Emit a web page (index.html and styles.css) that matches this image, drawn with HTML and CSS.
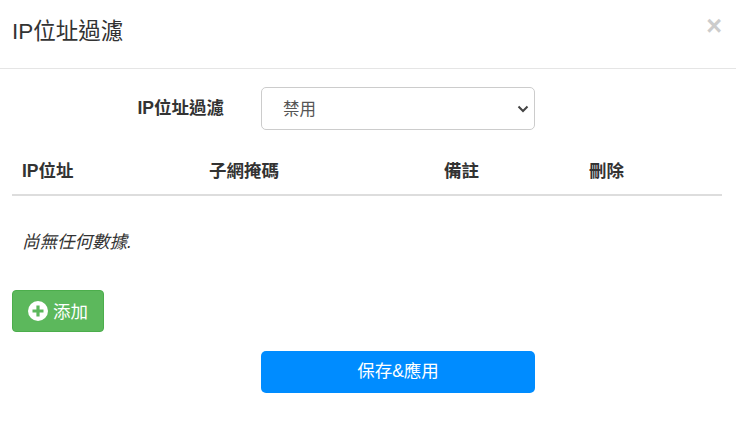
FILE: index.html
```html
<!DOCTYPE html>
<html lang="zh-Hant">
<head>
    <meta charset="UTF-8">
    <title>IP位址過濾</title>
    <link rel="stylesheet" href="styles.css">
</head>
<body>
    <div class="modal-header">
        <h4 class="modal-title">IP位址過濾</h4>
        <span class="close">&times;</span>
    </div>
    <div class="modal-body">
        <div class="form-row">
            <label class="form-label" for="filterMode">IP位址過濾</label>
            <select id="filterMode" class="form-select">
                <option>禁用</option>
                <option>允許</option>
                <option>拒絕</option>
            </select>
        </div>
        <table class="rule-table">
            <thead>
                <tr>
                    <th class="col-ip">IP位址</th>
                    <th class="col-mask">子網掩碼</th>
                    <th class="col-note">備註</th>
                    <th>刪除</th>
                </tr>
            </thead>
        </table>
        <p class="empty-text">尚無任何數據.</p>
        <button class="btn-add">
            <svg class="icon-plus" viewBox="0 0 20 20" width="20" height="20">
                <circle cx="10" cy="10" r="10" fill="#fff"/>
                <path d="M8.4 4.5h3.2v3.9h3.9v3.2h-3.9v3.9H8.4v-3.9H4.5V8.4h3.9z" fill="#5cb85c"/>
            </svg>
            <span class="btn-add-text">添加</span>
        </button>
        <div class="save-row">
            <button class="btn-save">保存&amp;應用</button>
        </div>
    </div>
</body>
</html>
```

FILE: styles.css
```css
body {
    margin: 0;
    background-color: white;
    color: #333;
    font-family: "Liberation Sans", "Noto Sans CJK TC", sans-serif;
    font-size: 17.5px;
}
.modal-header {
    display: flex;
    justify-content: space-between;
    align-items: flex-start;
    height: 68px;
    padding: 0 14px 0 12px;
    border-bottom: 1px solid #e5e5e5;
}
.modal-title {
    margin: 16px 0 0;
    font-size: 22.5px;
    font-weight: normal;
    line-height: 32px;
}
.close {
    margin-top: 12px;
    font-size: 27px;
    font-weight: bold;
    line-height: 28px;
    color: #ccc;
}
.modal-body {
    padding: 18px 14px 0 12px;
}
.form-row {
    display: flex;
    align-items: center;
}
.form-label {
    width: 212px;
    margin-top: -4px;
    text-align: right;
    font-weight: bold;
    font-size: 17.5px;
}
.form-select {
    appearance: none;
    width: 274px;
    height: 43px;
    margin-left: 37px;
    padding: 0 21px;
    border: 1px solid #ccc;
    border-radius: 5px;
    background-color: white;
    background-image: url("data:image/svg+xml,%3Csvg xmlns='http://www.w3.org/2000/svg' width='12' height='8' viewBox='0 0 12 8'%3E%3Cpath d='M1.5 1.5 6 6l4.5-4.5' fill='none' stroke='%23444' stroke-width='2'/%3E%3C/svg%3E");
    background-repeat: no-repeat;
    background-position: right 5px center;
    color: #555;
    font-family: inherit;
    font-size: 16.5px;
}
.rule-table {
    width: 710px;
    margin-top: 20px;
    border-collapse: collapse;
    table-layout: fixed;
}
.rule-table th {
    height: 38px;
    padding: 0 10px 6px;
    border-bottom: 2px solid #ddd;
    text-align: left;
    font-size: 17.5px;
}
.col-ip {
    width: 167px;
}
.col-mask {
    width: 215px;
}
.col-note {
    width: 125px;
}
.empty-text {
    margin: 0;
    padding: 34px 10px 0;
    font-style: italic;
    line-height: 24px;
}
.btn-add {
    display: flex;
    align-items: center;
    gap: 5px;
    width: 92px;
    height: 42px;
    margin-top: 36px;
    padding: 0 0 0 15px;
    border: 1px solid #4cae4c;
    border-radius: 4px;
    background-color: #5cb85c;
    color: white;
    font-family: inherit;
    font-size: 17.5px;
}
.btn-add-text {
    margin-bottom: 2px;
}
.save-row {
    margin-top: 19px;
    padding-left: 249px;
}
.btn-save {
    width: 274px;
    height: 42px;
    padding: 0 0 6px;
    border: none;
    border-radius: 5px;
    background-color: #008cff;
    color: white;
    font-family: inherit;
    font-size: 17.5px;
}
```
